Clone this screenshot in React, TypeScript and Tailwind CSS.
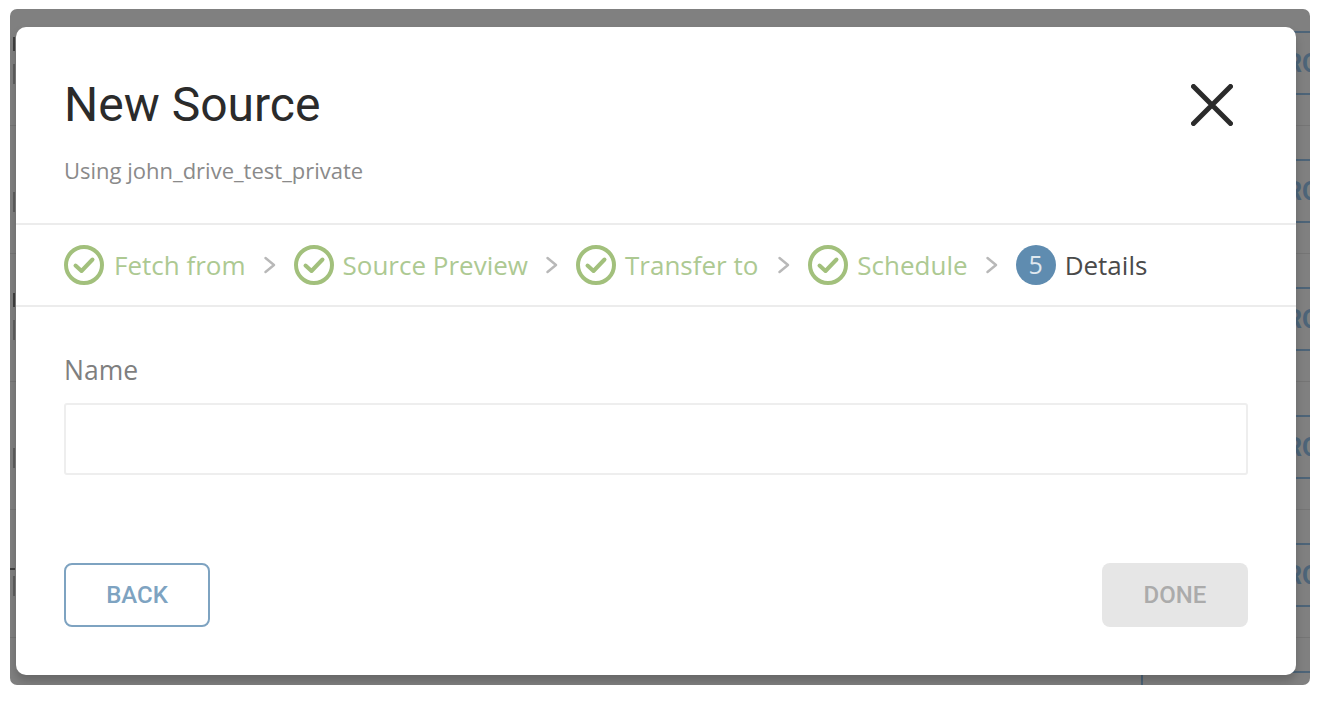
import React from "react";

function Check() {
  return (
    <svg width="40" height="40" viewBox="0 0 40 40" fill="none" className="shrink-0">
      <circle cx="20" cy="20" r="18" stroke="#a2c07c" strokeWidth="4" />
      <path d="M11.5 20.5 L17.5 26 L28.5 14.5" stroke="#a2c07c" strokeWidth="4" strokeLinecap="round" strokeLinejoin="round" />
    </svg>
  );
}

function Chevron() {
  return (
    <svg width="12" height="18" viewBox="0 0 12 18" fill="none" className="shrink-0">
      <path d="M1.5 2 L10 9 L1.5 16" stroke="#b8b8b8" strokeWidth="2.4" strokeLinecap="round" strokeLinejoin="round" />
    </svg>
  );
}

function Done({ label, gap }: { label: string; gap: string }) {
  return (
    <div className={`flex items-center ${gap}`}>
      <Check />
      <span className="text-[26px] leading-none text-[#adc992]">{label}</span>
    </div>
  );
}

function Sep({ className }: { className: string }) {
  return (
    <div className={className}>
      <Chevron />
    </div>
  );
}

const rows = [0, 1, 2, 3, 4, 5];

export default function App() {
  return (
    <div className="w-[1322px] h-[704px] bg-white pt-[9px] pl-[10px] font-['Open_Sans',sans-serif]">
      <div className="relative w-[1300px] h-[676px] bg-[#808080] rounded-[7px] overflow-hidden">
        <div className="flex flex-col pt-[22px]">
          {rows.map((r) => (
            <div key={r} className="h-[128px] shrink-0">
              <div className="h-[64px] flex">
                <div className="w-[5px] pt-[6px]">
                  <div className={r === 0 || r === 2 ? "ml-[3px] w-[2px] h-[14px] bg-[#3f3f3f]" : "h-[14px]"} />
                  <div className={r === 4 ? "mt-[5px] w-[5px] h-[2px] bg-[#3f3f3f]" : "mt-[5px] h-[2px]"} />
                  <div className="mt-[6px] ml-[3px] w-[2px] h-[20px] bg-[#5f5f5f]" />
                </div>
                <div className="flex-1">
                  {r === 5 && <div className="ml-[1126px] w-[2px] h-[64px] bg-[#4d6478]" />}
                </div>
                <div className="w-[24px] border-y-2 border-[#4d6478] flex items-center overflow-hidden pt-[2px]">
                  <span className="text-[25px] font-bold font-['Roboto',sans-serif] text-[#4d6478] whitespace-nowrap">RO</span>
                </div>
              </div>
              <div className="h-[31px] border-b border-[#757575]" />
            </div>
          ))}
        </div>
        <div className="absolute left-[6px] top-[18px] w-[1280px] h-[648px] bg-white rounded-[10px] flex flex-col shadow-[0_6px_10px_rgba(0,0,0,0.2)]">
          <div className="h-[198px] border-b-2 border-[#ececec] pl-[48px] pr-[63px] flex justify-between">
            <div className="pt-[48px]">
              <h1 className="text-[48px] leading-[60px] text-[#2b2b2b] font-['Roboto',sans-serif]">New Source</h1>
              <p className="mt-[20px] text-[22px] leading-[30px] text-[#8a8a8a]">Using john_drive_test_private</p>
            </div>
            <svg width="42" height="42" viewBox="0 0 42 42" fill="none" className="mt-[57px] shrink-0">
              <path d="M2.5 2.5 L39.5 39.5 M39.5 2.5 L2.5 39.5" stroke="#2b2b2b" strokeWidth="5" strokeLinecap="round" />
            </svg>
          </div>
          <div className="h-[82px] border-b-2 border-[#ececec] pl-[48px] flex items-center">
            <Done label="Fetch from" gap="gap-[10px]" />
            <Sep className="ml-[18px] mr-[18px]" />
            <Done label="Source Preview" gap="gap-[9px]" />
            <Sep className="ml-[18px] mr-[18px]" />
            <Done label="Transfer to" gap="gap-[9px]" />
            <Sep className="ml-[20px] mr-[18px]" />
            <Done label="Schedule" gap="gap-[9px]" />
            <Sep className="ml-[18px] mr-[18px]" />
            <div className="flex items-center gap-[9px]">
              <div className="w-[40px] h-[40px] rounded-full bg-[#5f8cb0] text-[#dfe8ef] text-[25px] flex items-center justify-center">5</div>
              <span className="text-[26px] leading-none text-[#4a4a4a]">Details</span>
            </div>
          </div>
          <div className="flex-1 px-[48px] flex flex-col">
            <label className="mt-[47px] text-[26.5px] leading-[32px] text-[#7f7f7f]">Name</label>
            <input className="mt-[17px] h-[72px] w-full border-2 border-[#eeeeee] rounded-[3px] bg-white" />
            <div className="mt-[88px] flex justify-between">
              <button className="w-[146px] h-[64px] border-2 border-[#7ea3c1] rounded-[8px] text-[24px] font-medium text-[#7ea3c1] font-['Roboto',sans-serif]">BACK</button>
              <button className="w-[146px] h-[64px] bg-[#e6e6e6] rounded-[8px] text-[24px] font-medium text-[#ababab] font-['Roboto',sans-serif]">DONE</button>
            </div>
          </div>
        </div>
      </div>
    </div>
  );
}
